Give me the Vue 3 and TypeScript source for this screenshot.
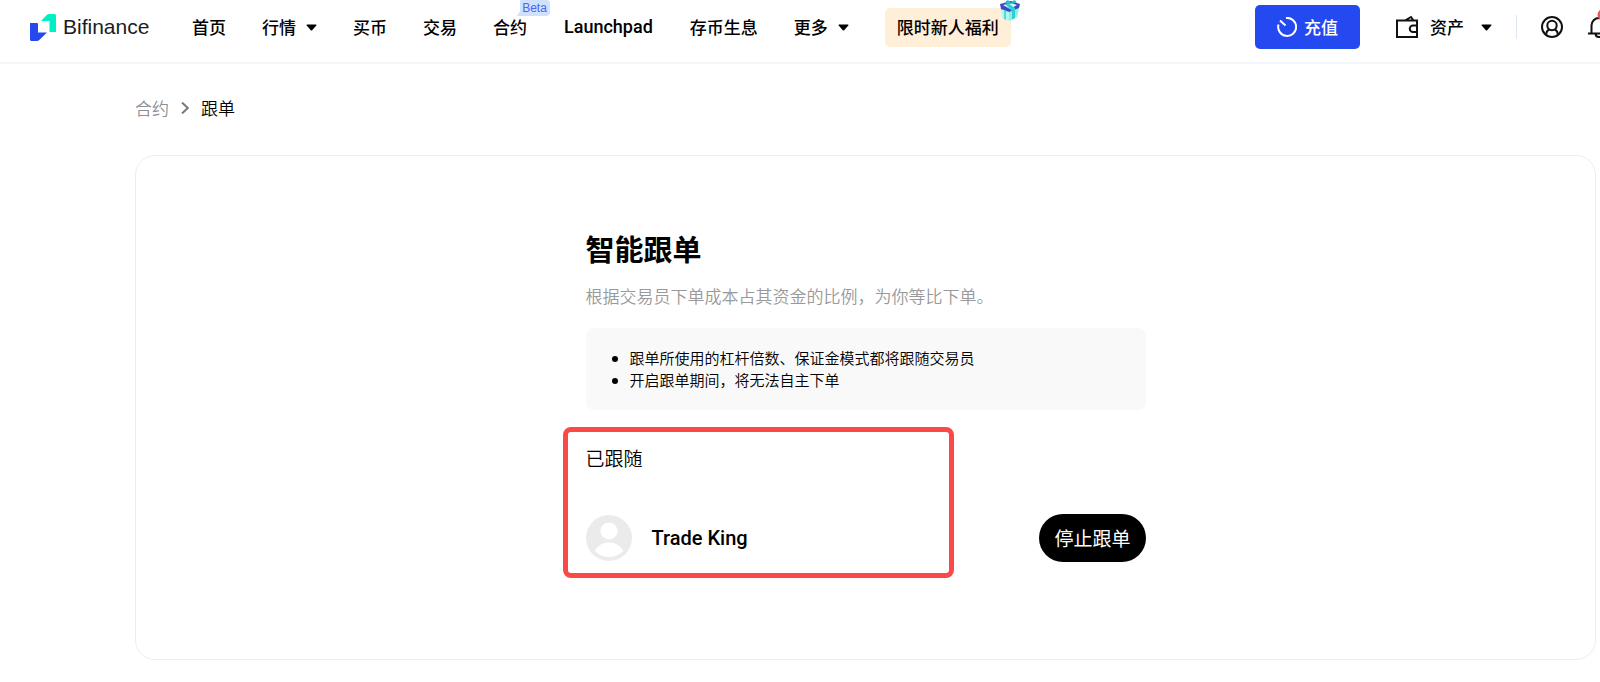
<script setup lang="ts">
interface NavItem {
  label: string
  caret?: boolean
  beta?: boolean
  latin?: boolean
}

const navItems: NavItem[] = [
  { label: '首页' },
  { label: '行情', caret: true },
  { label: '买币' },
  { label: '交易' },
  { label: '合约', beta: true },
  { label: 'Launchpad', latin: true },
  { label: '存币生息' },
  { label: '更多', caret: true },
]

const notes: string[] = [
  '跟单所使用的杠杆倍数、保证金模式都将跟随交易员',
  '开启跟单期间，将无法自主下单',
]
</script>

<template>
  <div class="page">
    <header class="header">
      <a class="logo" href="#">
        <svg class="logo-mark" viewBox="0 0 26 27" aria-hidden="true">
          <path d="M11 7 17 0.8Q17.800 0 19 0H24.500Q26 0 26 1.500V18H19.500V7Z" fill="#00efc4" />
          <path d="M0 9H7Q8 9 8 10V18.500H17L9 26.200Q8.200 27 7 27H1.500Q0 27 0 25.500Z" fill="#2549ed" />
        </svg>
        <span>Bifinance</span>
      </a>

      <nav class="nav">
        <a v-for="item in navItems" :key="item.label" class="nav-link" href="#">
          <span :class="{ latin: item.latin }">{{ item.label }}</span>
          <svg v-if="item.caret" class="caret" viewBox="0 0 11 7" aria-hidden="true">
            <path d="M1 .5h9q.8.3.3 1L6.200 6.200q-.7.6-1.400 0L.7 1.500Q.2.800 1 .5Z" />
          </svg>
          <span v-if="item.beta" class="beta">Beta</span>
        </a>
        <a class="promo" href="#">
          限时新人福利
          <svg class="gift" viewBox="0 0 22 22" aria-hidden="true">
            <path d="M2 9 10 12 20 8 18 17 10 21 3 18Z" fill="#b2f8f0" />
            <path d="M10 12 20 8 18 17 10 21Z" fill="#8df0e6" />
            <path d="M1 4 12 1 21 4 20 8 10 12 2 9Z" fill="#3a4bc8" />
            <path d="M4 5 12 3 18 5 11 9Z" fill="#d9fbff" />
            <path d="M6 4 9 3 16 8V18L13 19.500V11Z" fill="#2fcfd0" />
            <path d="M5 10 7 11V20L5 19Z" fill="#4fdcd8" />
            <path d="M11 4Q6 3 7 1Q10-1 12 3Q14-1 17 1Q18 3 11 4Z" fill="#27bfd0" />
          </svg>
        </a>
      </nav>

      <div class="tools">
        <button class="deposit" type="button">
          <svg class="deposit-icon" viewBox="0 0 20 20" aria-hidden="true">
            <path d="M9 1a9 9 0 1 1-7.500 6.500" />
            <path d="M3 3.500 8.500 8.500" />
          </svg>
          充值
        </button>
        <a class="assets" href="#">
          <svg class="line-icon" viewBox="0 0 22 22" aria-hidden="true">
            <path d="M1 4.500H21V21H1ZM21 9.500H17a3.200 3.200 0 0 0 0 6.500H21M9 4.500 15 1 17.500 4.500" />
          </svg>
          <span>资产</span>
          <svg class="caret" viewBox="0 0 11 7" aria-hidden="true">
            <path d="M1 .5h9q.8.3.3 1L6.200 6.200q-.7.6-1.400 0L.7 1.500Q.2.800 1 .5Z" />
          </svg>
        </a>
        <span class="divider"></span>
        <button class="icon-button" type="button" aria-label="用户中心">
          <svg class="line-icon" viewBox="0 0 22 22" aria-hidden="true">
            <circle cx="11" cy="11" r="10" />
            <circle cx="11" cy="9.500" r="4.700" />
            <path d="M5.200 19V18Q5.500 14.500 8.500 13.500M16.800 19V18Q16.500 14.500 13.500 13.500" />
          </svg>
        </button>
        <button class="icon-button bell" type="button" aria-label="通知">
          <svg class="line-icon" viewBox="0 0 22 22" aria-hidden="true">
            <path d="M0 17.500H22M3.500 17.500V9.500a7.500 7.500 0 0 1 15 0V17.500M7.500 18Q8 21 11 21T14.500 18" />
            <circle class="dot" cx="15.500" cy="-1" r="6" />
          </svg>
        </button>
      </div>
    </header>

    <main class="main">
      <nav class="crumbs" aria-label="面包屑">
        <a class="crumb-parent" href="#">合约</a>
        <svg class="chevron" viewBox="0 0 8 12" aria-hidden="true">
          <path d="M1 .5 6.800 6 1 11.500" />
        </svg>
        <span>跟单</span>
      </nav>

      <section class="card">
        <div class="content">
          <h1 class="title">智能跟单</h1>
          <p class="subtitle">根据交易员下单成本占其资金的比例，为你等比下单。</p>
          <ul class="notes">
            <li v-for="note in notes" :key="note">{{ note }}</li>
          </ul>
          <div class="following">
            <h2 class="following-title">已跟随</h2>
            <div class="trader">
              <svg class="avatar" viewBox="0 0 46 46" aria-hidden="true">
                <circle cx="23" cy="23" r="23" fill="#ebebeb" />
                <circle cx="23" cy="16" r="8.500" fill="#fff" />
                <path d="M8.500 36Q13 27.500 23 27.500T37.500 36Q31 42 23 42T8.500 36Z" fill="#fff" />
              </svg>
              <span class="trader-name">Trade King</span>
              <button class="stop" type="button">停止跟单</button>
            </div>
            <div class="highlight"></div>
          </div>
        </div>
      </section>
    </main>
  </div>
</template>

<style>
body {
  margin: 0;
  background: #fff;
}
</style>

<style scoped>
.page {
  color: #000;
  font-family: "Noto Sans CJK SC", sans-serif;
  font-size: 17px;
  line-height: 24px;
  overflow: hidden;
}

a {
  color: inherit;
  text-decoration: none;
}

button {
  margin: 0;
  border: 0;
  font: inherit;
  cursor: pointer;
}

.header {
  display: flex;
  align-items: center;
  box-sizing: border-box;
  height: 64px;
  padding: 0 0 8px 30px;
  border-bottom: 2px solid #f4f5fb;
  font-weight: 500;
  white-space: nowrap;
}

.logo {
  display: flex;
  align-items: center;
  gap: 7px;
  width: 162px;
  color: #1c1c20;
  font-family: "Liberation Sans", Arial, sans-serif;
  font-size: 21px;
  font-weight: 400;
}

.logo-mark {
  width: 26px;
  height: 27px;
}

.nav {
  display: flex;
  align-items: center;
  gap: 36px;
}

.nav-link {
  position: relative;
  display: flex;
  align-items: center;
  gap: 10px;
}

.latin {
  padding: 0 1px;
  font-family: Roboto, sans-serif;
  font-size: 18px;
}

.caret {
  width: 11px;
  height: 7px;
  fill: #000;
}

.beta {
  position: absolute;
  top: -15px;
  left: 24px;
  width: 31px;
  padding-left: 2px;
  border-radius: 4px 4px 4px 0;
  background: #cfe1fd;
  clip-path: polygon(3px 0, 100% 0, 100% 100%, 0 100%, 3px 70%);
  color: #4a66f0;
  font-family: "Liberation Sans", Arial, sans-serif;
  font-size: 12px;
  font-weight: 400;
  line-height: 16px;
  text-align: center;
}

.promo {
  position: relative;
  padding: 7px 12px 8px;
  border-radius: 5px;
  background: #ffeed8;
}

.gift {
  position: absolute;
  top: -8px;
  right: -10px;
  width: 22px;
  height: 22px;
}

.tools {
  display: flex;
  align-items: center;
  margin-left: auto;
}

.deposit {
  display: flex;
  align-items: center;
  gap: 7px;
  height: 44px;
  margin-right: 36px;
  padding: 0 22px;
  border-radius: 5px;
  background: #2549f0;
  color: #fff;
}

.deposit-icon {
  width: 20px;
  height: 20px;
  fill: none;
  stroke: #fff;
  stroke-width: 2;
}

.assets {
  display: flex;
  align-items: center;
  gap: 12px;
}

.assets .caret {
  margin-left: 5px;
}

.line-icon {
  display: block;
  width: 22px;
  height: 22px;
  overflow: visible;
  fill: none;
  stroke: #111;
  stroke-width: 2;
}

.dot {
  fill: #f4505a;
  stroke: none;
}

.divider {
  width: 1px;
  height: 24px;
  margin: 0 24px;
  background: #dfe4f2;
}

.icon-button {
  padding: 0;
  background: transparent;
}

.bell {
  width: 12px;
  margin-left: 25px;
}

.main {
  padding: 32px 4px 20px 135px;
}

.crumbs {
  display: flex;
  align-items: center;
  gap: 12px;
}

.crumb-parent {
  color: #8e8e93;
}

.crumbs,
.subtitle,
.notes,
.following-title {
  font-weight: 350;
}

.chevron {
  width: 8px;
  height: 12px;
  fill: none;
  stroke: #77777f;
  stroke-width: 2;
}

.card {
  margin-top: 35px;
  padding: 71px 20px 97px;
  border: 1px solid #ededed;
  border-radius: 20px;
}

.content {
  max-width: 560px;
  margin: 0 auto;
}

.title {
  margin: 0;
  font-size: 29px;
  font-weight: 700;
  line-height: 42px;
}

.subtitle {
  margin: 15px 0 20px;
  color: #999;
}

.notes {
  margin: 0 0 17px;
  padding: 19px 20px 19px 44px;
  border-radius: 8px;
  background: #f9f9f9;
  font-size: 15px;
  line-height: 22px;
}

.following {
  position: relative;
  padding-top: 18px;
}

.following-title {
  margin: 0 0 43px;
  font-size: 19px;
  line-height: 26px;
}

.trader {
  display: flex;
  align-items: center;
}

.avatar {
  width: 46px;
  height: 46px;
}

.trader-name {
  margin-left: 20px;
  font-family: Roboto, sans-serif;
  font-size: 20px;
  font-weight: 500;
}

.stop {
  height: 48px;
  margin-left: auto;
  padding: 0 15px;
  border-radius: 24px;
  background: #000;
  color: #fff;
  font-size: 19px;
}

.highlight {
  position: absolute;
  top: 0;
  bottom: -16px;
  left: -23px;
  box-sizing: border-box;
  width: 391px;
  border: 5px solid #fa4a48;
  border-radius: 8px;
  pointer-events: none;
}
</style>
